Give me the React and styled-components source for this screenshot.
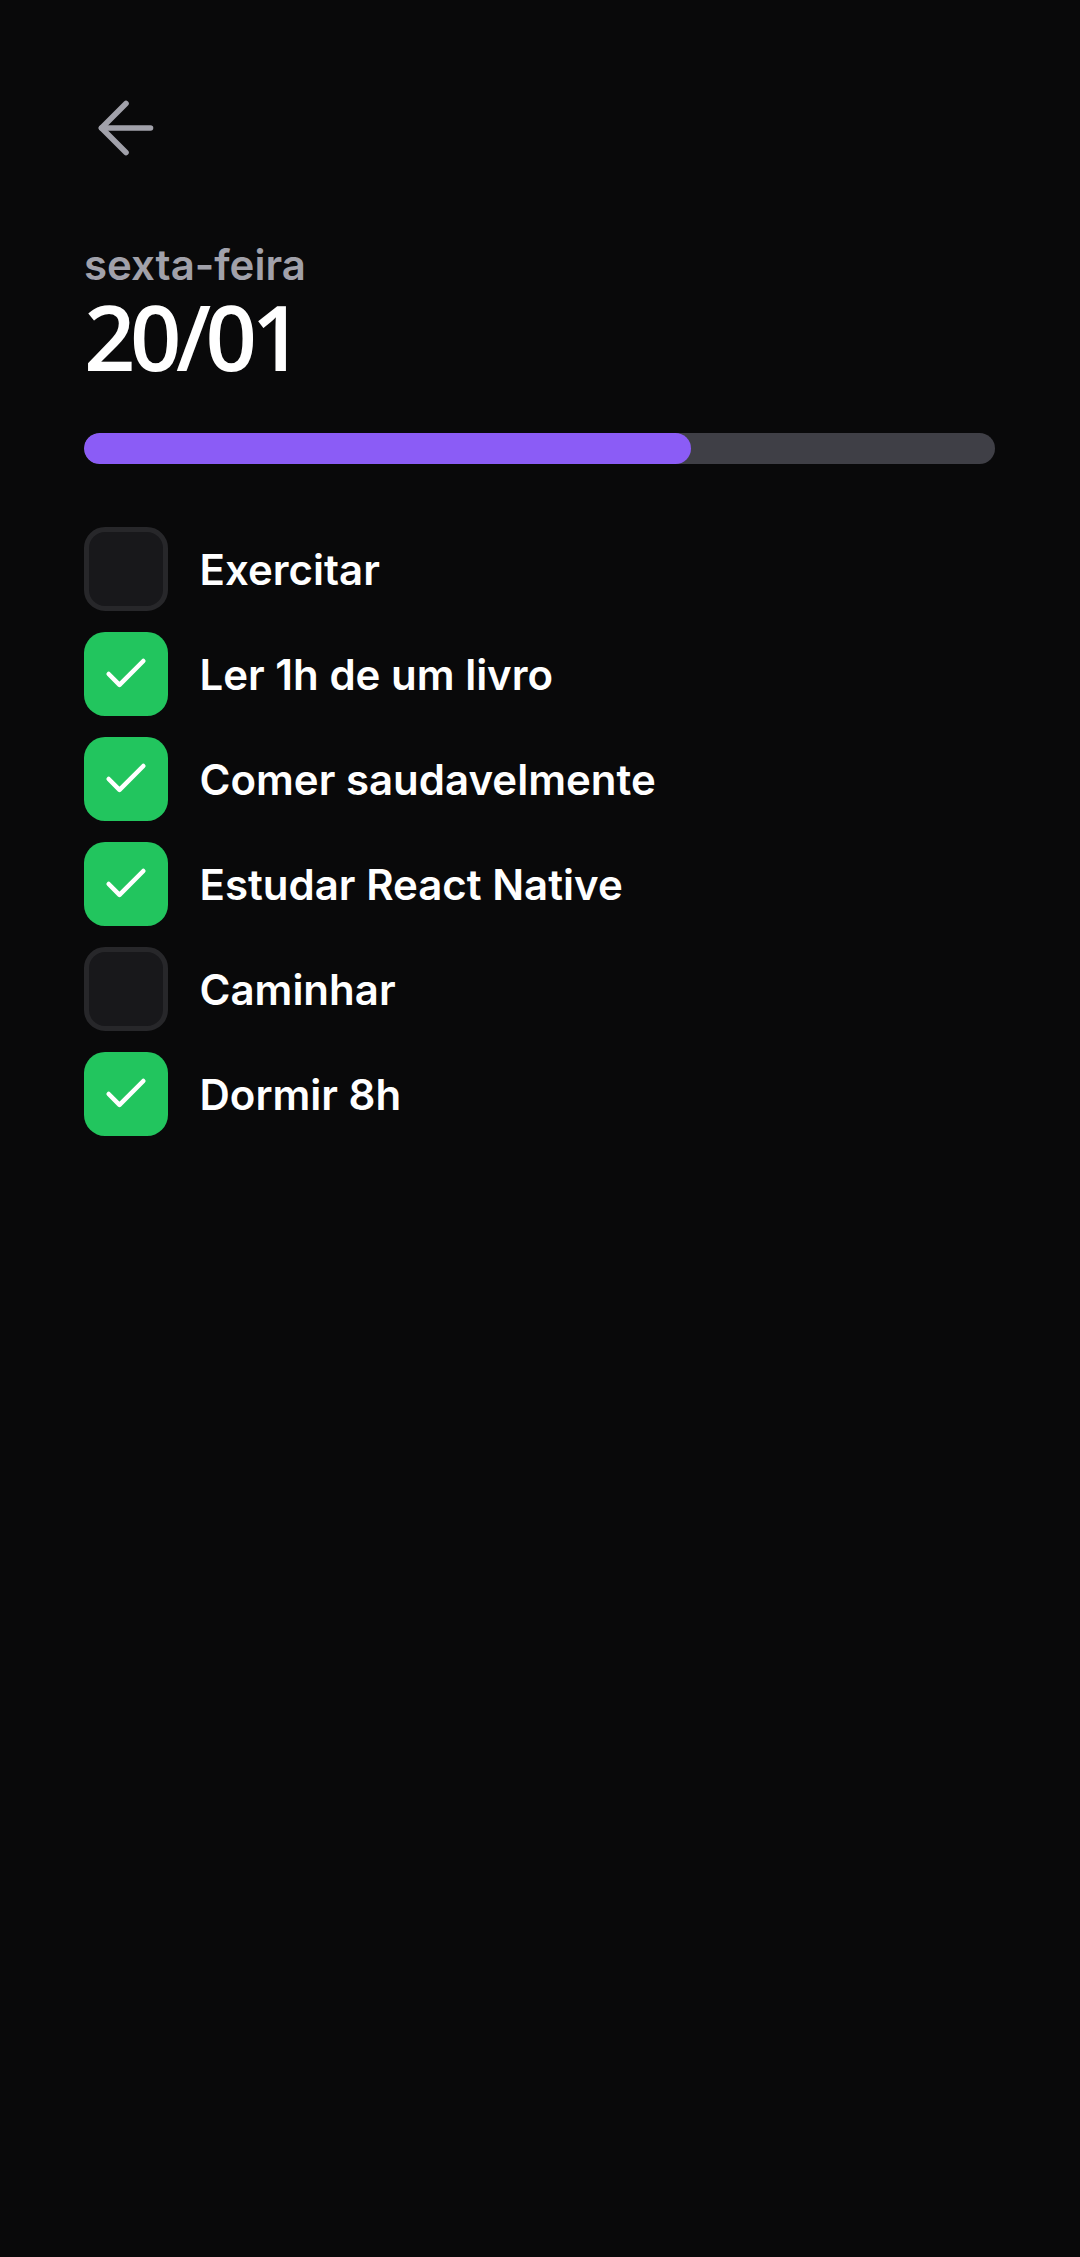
import React from "react";
import styled, { createGlobalStyle } from "styled-components";
import { ArrowLeft, Check } from "lucide-react";

const habits = [
  { title: "Exercitar", done: false },
  { title: "Ler 1h de um livro", done: true },
  { title: "Comer saudavelmente", done: true },
  { title: "Estudar React Native", done: true },
  { title: "Caminhar", done: false },
  { title: "Dormir 8h", done: true },
];

const Habit = () => {
  const completed = habits.filter((h) => h.done).length;
  return (
    <>
      <GlobalStyle />
      <Screen>
        <BackButton aria-label="Voltar">
          <ArrowLeft size={84} strokeWidth={1.6} color="#a1a1aa" />
        </BackButton>
        <WeekDay>sexta-feira</WeekDay>
        <DayMonth>20/01</DayMonth>
        <ProgressTrack>
          <ProgressFill style={{ width: `${(completed / habits.length) * 100}%` }} />
        </ProgressTrack>
        <List>
          {habits.map((habit) => (
            <Row key={habit.title}>
              <Box $checked={habit.done}>
                {habit.done && <Check size={52} strokeWidth={2.1} color="#ffffff" />}
              </Box>
              <Label>{habit.title}</Label>
            </Row>
          ))}
        </List>
      </Screen>
    </>
  );
};

const GlobalStyle = createGlobalStyle`
  html, body {
    margin: 0;
    padding: 0;
    background: #09090a;
  }
  body {
    font-family: Inter, "Noto Sans", sans-serif;
    -webkit-font-smoothing: antialiased;
  }
`;

const Screen = styled.div`
  min-height: 2257px;
  box-sizing: border-box;
  background: #09090a;
  padding: 86px 85px 0 84px;
  display: flex;
  flex-direction: column;
`;

const BackButton = styled.button`
  width: 84px;
  height: 84px;
  padding: 0;
  border: none;
  background: transparent;
  display: flex;
  align-items: center;
  justify-content: center;
  cursor: pointer;
`;

const WeekDay = styled.span`
  margin-top: 63px;
  font-family: Inter, sans-serif;
  font-weight: 600;
  font-size: 42px;
  line-height: 63px;
  color: #a1a1aa;
  text-transform: lowercase;
`;

const DayMonth = styled.span`
  margin-bottom: 14.5px;
  font-family: "Open Sans", "Noto Sans", sans-serif;
  font-weight: 600;
  font-size: 90px;
  line-height: 80px;
  letter-spacing: -5.5px;
  color: #ffffff;
`;

const ProgressTrack = styled.div`
  margin-top: 42px;
  width: 100%;
  height: 31.5px;
  border-radius: 31.5px;
  background: #3f3f46;
  overflow: hidden;
`;

const ProgressFill = styled.div`
  height: 100%;
  border-radius: 31.5px;
  background: #8b5cf6;
`;

const List = styled.div`
  margin-top: 63px;
  display: flex;
  flex-direction: column;
  gap: 21px;
`;

const Row = styled.div`
  display: flex;
  align-items: center;
`;

const Box = styled.div`
  width: 84px;
  height: 84px;
  box-sizing: border-box;
  border-radius: 21px;
  display: flex;
  align-items: center;
  justify-content: center;
  background: ${(p) => (p.$checked ? "#22c55e" : "#18181b")};
  border: ${(p) => (p.$checked ? "none" : "5px solid #27272a")};
`;

const Label = styled.span`
  margin-left: 31.5px;
  font-family: Inter, sans-serif;
  font-weight: 600;
  font-size: 42px;
  line-height: 63px;
  color: #ffffff;
`;

export default Habit;
